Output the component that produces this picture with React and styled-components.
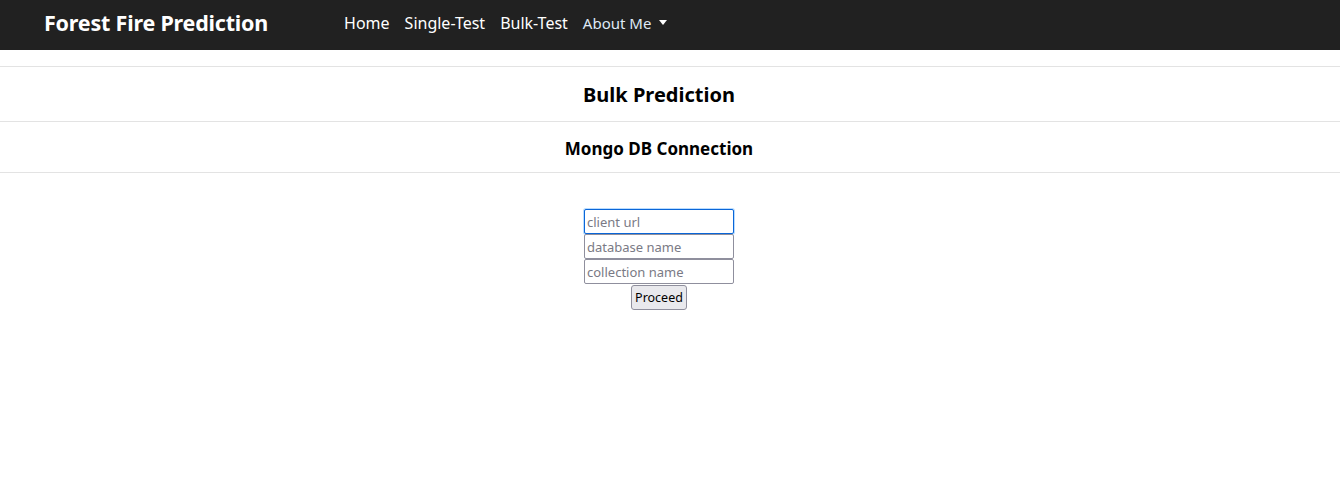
import React from "react";
import styled, { createGlobalStyle } from "styled-components";

const GlobalStyle = createGlobalStyle`
  body {
    margin: 0;
    font-family: "Noto Sans", "Open Sans", sans-serif;
    background: #fff;
    color: #000;
  }
`;

const NavBar = styled.nav`
  height: 50px;
  box-sizing: border-box;
  background: #212121;
  display: flex;
  align-items: center;
  padding: 0 44px 5px;
`;

const Brand = styled.a`
  color: #fff;
  font-size: 21.5px;
  font-weight: 700;
  text-decoration: none;
  margin-right: 76px;
  letter-spacing: -0.2px;
`;

const NavList = styled.ul`
  display: flex;
  align-items: center;
  gap: 15px;
  list-style: none;
  margin: 0;
  padding: 0;
`;

const NavLink = styled.a`
  color: ${(p) => (p.$muted ? "#dfe9f5" : "#fff")};
  font-size: ${(p) => (p.$muted ? "15px" : "16px")};
  text-decoration: none;
  display: flex;
  align-items: center;
  gap: 8px;
`;

const Caret = styled.span`
  width: 0;
  height: 0;
  border-left: 4px solid transparent;
  border-right: 4px solid transparent;
  border-top: 5px solid #fff;
`;

const Spacer = styled.div`
  height: 16px;
`;

const Rule = styled.hr`
  border: 0;
  border-top: 1px solid #e3e3e3;
  margin: 0;
`;

const Title = styled.h2`
  text-align: center;
  font-size: ${(p) => p.$size};
  font-weight: 700;
  margin: 0;
  padding: ${(p) => p.$pad};
  padding-right: 22px;
`;

const Form = styled.form`
  display: flex;
  flex-direction: column;
  align-items: center;
  margin-top: 36px;
  padding-right: 22px;
`;

const Field = styled.input`
  width: 150px;
  height: 25px;
  box-sizing: border-box;
  border: 1px solid ${(p) => (p.$focused ? "#0a66d8" : "#8f8f9d")};
  border-radius: 2px;
  padding: 1px 2px;
  font-family: "Noto Sans", sans-serif;
  font-size: 13px;
  box-shadow: ${(p) => (p.$focused ? "0 0 0 1px #b9dcff" : "none")};
  outline: none;
  &::placeholder {
    color: #7a7a85;
  }
`;

const Button = styled.button`
  margin-top: 1px;
  height: 25px;
  padding: 0 3px;
  font-family: "Noto Sans", sans-serif;
  font-size: 12.5px;
  color: #000;
  background: #e9e9ed;
  border: 1px solid #8f8f9d;
  border-radius: 3px;
`;

export default function App() {
  return (
    <>
      <GlobalStyle />
      <NavBar>
        <Brand href="#">Forest Fire Prediction</Brand>
        <NavList>
          <li><NavLink href="#">Home</NavLink></li>
          <li><NavLink href="#">Single-Test</NavLink></li>
          <li><NavLink href="#">Bulk-Test</NavLink></li>
          <li>
            <NavLink href="#" $muted>
              About Me <Caret />
            </NavLink>
          </li>
        </NavList>
      </NavBar>
      <Spacer />
      <Rule />
      <Title $size="20px" $pad="14px 0 13px">Bulk Prediction</Title>
      <Rule />
      <Title $size="17px" $pad="15px 0 12px">Mongo DB Connection</Title>
      <Rule />
      <Form>
        <Field $focused placeholder="client url" autoFocus />
        <Field placeholder="database name" />
        <Field placeholder="collection name" />
        <Button type="button">Proceed</Button>
      </Form>
    </>
  );
}
